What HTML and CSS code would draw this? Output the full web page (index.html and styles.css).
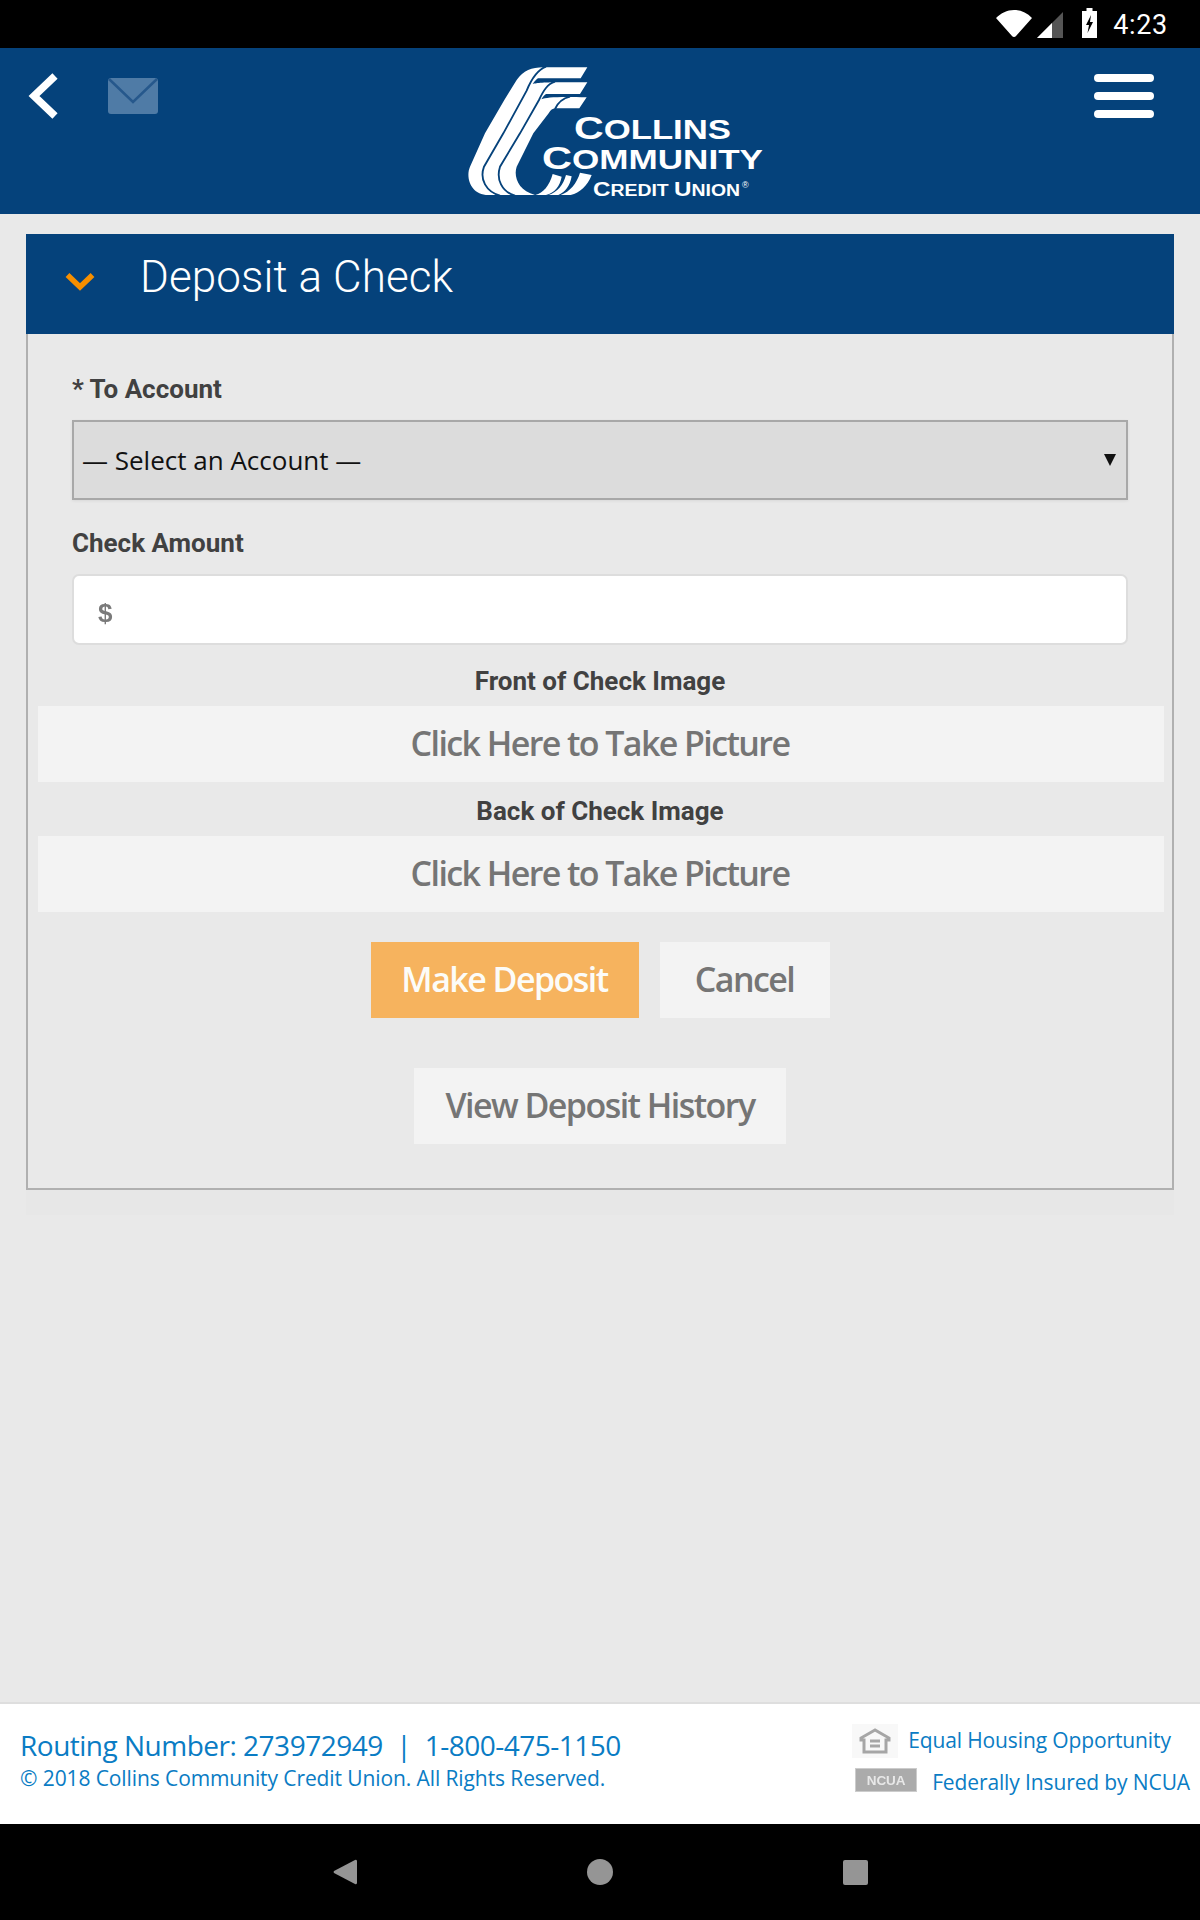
FILE: index.html
```html
<!DOCTYPE html>
<html lang="en">
<head>
<meta charset="utf-8">
<title>Deposit a Check</title>
<link rel="stylesheet" href="styles.css">
</head>
<body>
<div class="screen">
  <div class="statusbar">
    <svg class="st-wifi" width="36" height="27" viewBox="0 0 36 27"><path d="M0 8C5 3 11 0 18 0s13 3 18 8L20 26a2.500 2.500 0 0 1-4 0Z" fill="#fff"/></svg>
    <svg class="st-signal" width="26" height="26" viewBox="0 0 26 26"><path d="M26 0V26H0Z" fill="#555"/><path d="M15 11V26H0Z" fill="#fff"/></svg>
    <svg class="st-batt" width="15" height="30" viewBox="0 0 15 30"><path d="M4.500 0h6v3H15v27H0V3h4.500Z" fill="#fff"/><path d="M9 7 4 17h3l-1.500 8 5.500-11H8l1-7Z" fill="#000"/></svg>
    <span class="st-time">4:23</span>
  </div>
  <header class="topbar">
    <div class="top-left">
      <svg class="ic-back" width="30" height="46" viewBox="0 0 30 46"><path d="M27 3 6 23 27 43" fill="none" stroke="#fff" stroke-width="7.500"/></svg>
      <svg class="ic-mail" width="50" height="36" viewBox="0 0 50 36"><path d="M3 0h44a3 3 0 0 1 3 3v30a3 3 0 0 1-3 3H3a3 3 0 0 1-3-3V3a3 3 0 0 1 3-3Z" fill="#4f7ba6"/><path d="M1 1 25 24 49 1" fill="none" stroke="#26588c" stroke-width="2.500"/></svg>
    </div>
    <svg class="logo" width="300" height="136" viewBox="0 0 300 136">
      <g transform="translate(-8 -5) scale(.33333)">
        <path class="lg-fill" d="M250 22H382L362 55H234C230 58 225 62 218 72C235 67 260 66 382 67L360 102H258C254 104 250 108 244 118C260 112 290 110 380 112L358 145H285C278 146 272 150 266 160L220 220 170 320C160 350 175 392 225 405H85C32 405 16 352 30 320L75 220 133 120 170 60C190 32 215 22 250 22Z"/>
        <path class="lg-gap" d="M258 20C232 30 215 55 200 92L130 220 72 320C58 358 78 395 120 407"/>
        <path class="lg-gap" d="M285 65C262 72 250 92 237 120L180 220 120 320C108 358 125 395 165 407"/>
        <path class="lg-gap" d="M330 110C308 115 295 125 285 147"/>
        <path class="lg-fill" d="M226 405C250 398 268 378 278 342L305 350C300 378 285 398 258 405Z"/>
        <path class="lg-fill" d="M266 405C292 396 310 375 318 345L335 349C330 378 315 398 295 405Z"/>
        <path class="lg-fill" d="M302 405C330 395 350 370 360 338L395 345C382 378 360 398 332 405Z"/>
      </g>
      <text class="lg-a" x="106" y="74" textLength="157" lengthAdjust="spacingAndGlyphs">C<tspan class="lg-s">OLLINS</tspan></text>
      <text class="lg-a" x="74" y="104" textLength="221" lengthAdjust="spacingAndGlyphs">C<tspan class="lg-s">OMMUNITY</tspan></text>
      <text class="lg-b" x="125" y="131" textLength="147" lengthAdjust="spacingAndGlyphs">C<tspan class="lg-t">REDIT </tspan>U<tspan class="lg-t">NION</tspan></text>
      <text class="lg-r" x="274" y="123">®</text>
    </svg>
    <div class="burger"><i></i><i></i><i></i></div>
  </header>
  <main class="content">
    <section class="panel">
      <h1 class="panel-title">
        <svg class="ic-chev" width="30" height="20" viewBox="0 0 30 20"><path d="M2.500 3 15 15 27.500 3" fill="none" stroke="#f68f00" stroke-width="5.500"/></svg>
        <span>Deposit a Check</span>
      </h1>
      <div class="panel-body">
        <div class="fields">
          <label class="lbl">* To Account</label>
          <div class="select"><span>— Select an Account —</span><b class="caret"></b></div>
          <label class="lbl lbl-amt">Check Amount</label>
          <div class="input"><span class="dollar">$</span></div>
        </div>
        <div class="lbl lbl-c lbl-front">Front of Check Image</div>
        <div class="pic">Click Here to Take Picture</div>
        <div class="lbl lbl-c lbl-back">Back of Check Image</div>
        <div class="pic">Click Here to Take Picture</div>
        <div class="actions">
          <button class="btn btn-primary">Make Deposit</button>
          <button class="btn btn-cancel">Cancel</button>
        </div>
        <div class="actions actions-2">
          <button class="btn btn-history">View Deposit History</button>
        </div>
      </div>
      <div class="panel-shade"></div>
    </section>
  </main>
  <footer class="footer">
    <div class="foot-left">
      <div class="foot-main">Routing Number: 273972949 &nbsp;|&nbsp; 1-800-475-1150</div>
      <div class="foot-copy">© 2018 Collins Community Credit Union. All Rights Reserved.</div>
    </div>
    <div class="foot-right">
      <div class="foot-row foot-row-1">
        <svg class="ehl" width="46" height="34" viewBox="0 0 46 34"><rect width="46" height="34" fill="#f8f8f8"/><path d="M23 6 9 14v2h3v12h22V16h3v-2Z" fill="none" stroke="#a6a6a6" stroke-width="3"/><path d="M18 17h10M18 22h10" stroke="#a6a6a6" stroke-width="3"/></svg>
        <span class="ehl-text">Equal Housing Opportunity</span>
      </div>
      <div class="foot-row foot-row-2">
        <div class="ncua"><span>NCUA</span></div>
        <span>Federally Insured by NCUA</span>
      </div>
    </div>
  </footer>
  <nav class="navbar">
    <svg width="24" height="26" viewBox="0 0 24 26"><path d="M22 1a1.500 1.500 0 0 1 2 1v22a1.500 1.500 0 0 1-2 1L1 14a1.500 1.500 0 0 1 0-2Z" fill="#959595"/></svg>
    <svg width="26" height="26" viewBox="0 0 26 26"><circle cx="13" cy="13" r="13" fill="#959595"/></svg>
    <svg width="25" height="25" viewBox="0 0 25 25"><rect width="25" height="25" rx="2" fill="#959595"/></svg>
  </nav>
</div>
</body>
</html>
```
FILE: styles.css
```css
* { box-sizing: border-box; }
html, body { margin: 0; padding: 0; }
body { background: #e9e9e9; font-family: "Open Sans", sans-serif; }
.screen { width: 1200px; height: 1920px; display: flex; flex-direction: column; overflow: hidden; }

.statusbar { height: 48px; background: #000; display: flex; align-items: flex-start; justify-content: flex-end; padding-right: 32px; flex: none; }
.st-wifi { margin-right: 5px; margin-top: 10px; }
.st-signal { margin-right: 19px; margin-top: 12px; }
.st-batt { margin-right: 16px; margin-top: 8px; }
.st-time { color: #fff; font: 400 27px/48px "Roboto", sans-serif; letter-spacing: .7px; margin-top: 1px; }

.topbar { height: 166px; background: #05427b; flex: none; position: relative; display: flex; justify-content: space-between; padding: 26px 46px 0 28px; }
.top-left { display: flex; align-items: flex-start; gap: 50px; }
.ic-mail { margin-top: 4px; }
.ic-back { margin-top: -1px; }
.logo { position: absolute; left: 468px; top: 17px; }
.lg-fill { fill: #fff; }
.lg-gap { fill: none; stroke: #05427b; stroke-width: 5.5; }
.lg-a { font: 700 32px "Liberation Sans", sans-serif; fill: #fff; }
.lg-s { font-size: 27px; }
.lg-b { font: 700 20px "Liberation Sans", sans-serif; fill: #fff; }
.lg-t { font-size: 16px; }
.lg-r { font: 400 9px "Liberation Sans", sans-serif; fill: #fff; }
.burger { width: 60px; display: flex; flex-direction: column; gap: 10px; }
.burger i { display: block; height: 8px; border-radius: 4px; background: #fff; }

.content { flex: 1; padding: 20px 26px 0; }
.panel-title { margin: 0; height: 100px; background: #05427b; color: #fff; font: 300 44px "Roboto", sans-serif; letter-spacing: .1px; display: flex; align-items: center; padding-left: 39px; }
.ic-chev { margin-right: 45px; margin-bottom: 4px; }
.panel-title span { margin-bottom: 14px; }
.panel-body { border: 2px solid #b0b0b0; border-top: 0; height: 856px; padding: 0 8px 0 10px; text-align: center; }
.panel-shade { height: 25px; background: #e7e7e7; }
.fields { padding: 39px 36px 0 34px; text-align: left; }
.lbl { display: block; color: #414141; font: 700 26px/32px "Roboto", sans-serif; }
.select { height: 80px; margin-top: 15px; background: #dcdcdc; border: 2px solid #a8a8a8; display: flex; align-items: center; justify-content: space-between; padding: 0 10px 0 8px; font-size: 26px; color: #111; box-shadow: 0 1px 3px rgba(0,0,0,.07); }
.caret { width: 0; height: 0; border-left: 6px solid transparent; border-right: 6px solid transparent; border-top: 12px solid #111; margin-top: -1px; }
.lbl-amt { margin-top: 27px; }
.input { height: 71px; margin-top: 15px; background: #fff; border: 2px solid #ddd; border-radius: 7px; display: flex; align-items: center; padding-left: 24px; }
.dollar { color: #7a7a7a; font: 700 26px "Liberation Sans", sans-serif; margin-top: 8px; filter: blur(.7px); }
.lbl-c { text-align: center; padding-right: 2px; }
.lbl-front { margin-top: 20px; }
.lbl-back { margin-top: 13px; }
.lbl-c + .pic { margin-top: 9px; }
.pic { height: 76px; background: #f3f3f3; color: #757575; font-size: 34px; font-weight: 600; letter-spacing: -1.6px; line-height: 74px; text-align: center; padding-right: 2px; }
.actions { display: flex; justify-content: center; gap: 21px; margin-top: 30px; padding-right: 2px; }
.actions-2 { margin-top: 50px; }
.btn { height: 76px; border: 0; font: 600 34px "Open Sans", sans-serif; letter-spacing: -1.55px; padding: 0 0 2px; }
.btn-primary { width: 268px; background: #f6b35e; color: #fcfcf8; }
.btn-cancel { width: 170px; background: #f3f3f3; color: #757575; }
.btn-history { width: 372px; background: #f3f3f3; color: #757575; }

.footer { height: 122px; background: #fff; border-top: 2px solid #dedede; flex: none; display: flex; justify-content: space-between; color: #0a7cc4; }
.foot-left { padding: 22px 0 0 20px; }
.foot-main { font-size: 28px; letter-spacing: -.5px; line-height: 39px; white-space: nowrap; }
.foot-copy { font-size: 21px; letter-spacing: -.1px; line-height: 26px; white-space: nowrap; }
.foot-right { padding: 20px 10px 0 0; font-size: 21px; letter-spacing: -.12px; }
.foot-row { display: flex; align-items: center; }
.foot-row-1 { margin-left: -3px; height: 34px; gap: 10px; }
.ehl-text { margin-top: -2px; }
.foot-row-2 { margin-top: 6px; height: 36px; gap: 15px; }
.ncua { width: 62px; height: 24px; background: #ababab; border: 1px solid #ccc; display: flex; align-items: center; justify-content: center; margin-top: -4px; }
.ncua span { color: #e8e8e8; font: 700 13.500px "Liberation Sans", sans-serif; filter: blur(.5px); }

.navbar { height: 96px; background: #000; flex: none; display: flex; align-items: center; justify-content: center; gap: 230px; }
```
